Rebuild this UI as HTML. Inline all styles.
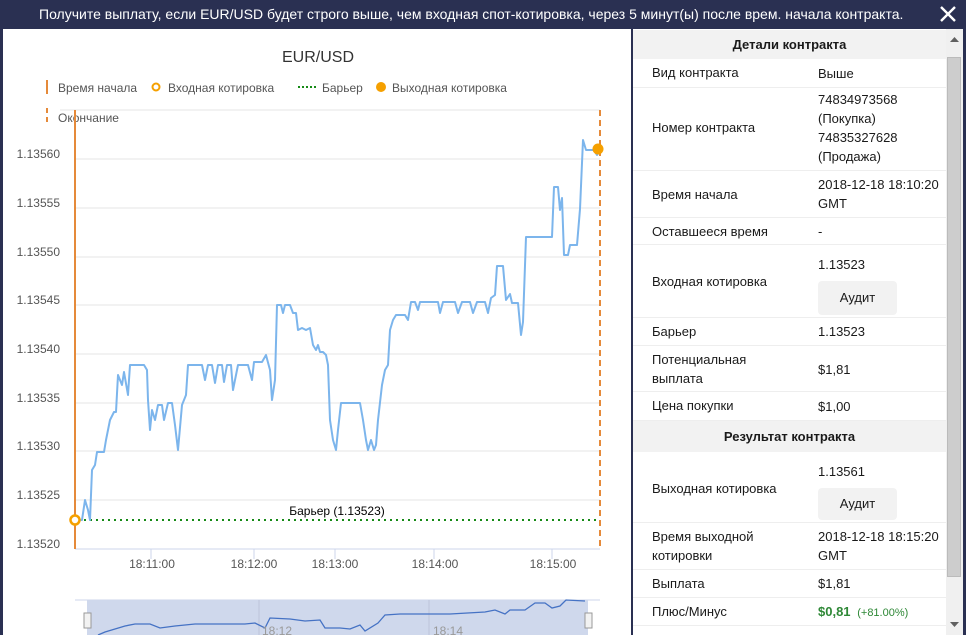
<!DOCTYPE html>
<html><head><meta charset="utf-8"><style>
*{margin:0;padding:0;box-sizing:border-box}
body{width:966px;height:635px;overflow:hidden;background:#2a3052;font-family:"Liberation Sans",Arial,sans-serif;position:relative}
#top{position:absolute;left:0;top:0;width:966px;height:29px;color:#fff;font-size:14px;line-height:29px;padding-left:39px;white-space:nowrap}
#x{position:absolute;left:939px;top:5px}
#left{position:absolute;left:3px;top:29px;width:628px;height:606px;background:#fff}
#right{position:absolute;left:633px;top:29px;width:313px;height:606px;background:#fff;font-size:13px;color:#1a1a1a}
#sb{position:absolute;left:946px;top:29px;width:17px;height:606px;background:#f0f0f0}
.row{position:absolute;left:0;width:313px;border-bottom:1px solid #eee}
.l{position:absolute;left:19px}
.v{position:absolute;left:185px;line-height:19px}
.hd{position:absolute;left:0;width:313px;background:#f2f2f2;font-weight:bold;text-align:center}
.btn{position:absolute;left:185px;width:79px;background:#f2f2f2;border-radius:4px;text-align:center}
</style></head><body>
<div id="top">Получите выплату, если EUR/USD будет строго выше, чем входная спот-котировка, через 5 минут(ы) после врем. начала контракта.</div>
<svg id="x" width="18" height="18"><path d="M2 2L16 16M16 2L2 16" stroke="#fff" stroke-width="2.4"/></svg>
<div id="left"></div>
<svg style="position:absolute;left:0;top:0" width="631" height="635" font-family="Liberation Sans,Arial,sans-serif">
<text x="318" y="62" text-anchor="middle" font-size="16" fill="#333">EUR/USD</text>
<g font-size="12" fill="#555">
<rect x="46" y="80" width="2" height="14" fill="#e58a3a"/><text x="58" y="92">Время начала</text>
<circle cx="156" cy="87" r="3.5" fill="#fff" stroke="#f5a000" stroke-width="2"/><text x="168" y="92">Входная котировка</text>
<path d="M298 87H318" stroke="#168a16" stroke-width="2" stroke-dasharray="2,2"/><text x="322" y="92">Барьер</text>
<circle cx="381" cy="87" r="5" fill="#f5a000"/><text x="392" y="92">Выходная котировка</text>
<path d="M47 108V126" stroke="#e58a3a" stroke-width="2" stroke-dasharray="5,4"/><text x="58" y="122">Окончание</text>
</g>
<path d="M60 110H600" stroke="#e6e6e6"/>
<g stroke="#e6e6e6"><path d="M75 159H600M75 208H600M75 257H600M75 305H600M75 354H600M75 403H600M75 451H600M75 500H600"/></g>
<path d="M75 549H600" stroke="#ccd6eb"/>
<g stroke="#ccd6eb"><path d="M151 549v10M254 549v10M335 549v10M434 549v10M552 549v10"/></g>
<g font-size="12" fill="#555" text-anchor="end">
<text x="60" y="158">1.13560</text><text x="60" y="207">1.13555</text><text x="60" y="256">1.13550</text><text x="60" y="304">1.13545</text><text x="60" y="353">1.13540</text><text x="60" y="402">1.13535</text><text x="60" y="450">1.13530</text><text x="60" y="499">1.13525</text><text x="60" y="548">1.13520</text>
</g>
<g font-size="12" fill="#555" text-anchor="middle"><text x="152" y="568">18:11:00</text><text x="254" y="568">18:12:00</text><text x="335" y="568">18:13:00</text><text x="435" y="568">18:14:00</text><text x="553" y="568">18:15:00</text></g>
<path d="M78 520H600" stroke="#168a16" stroke-width="2" stroke-dasharray="2,4"/>
<text x="337" y="515" text-anchor="middle" font-size="12" fill="#000">Барьер (1.13523)</text>
<polyline fill="none" stroke="#7cb5ec" stroke-width="2" stroke-linejoin="round" points="75,520 82,520 85,500 88,510 90,520 92,470 95,465 97,452 104,452 106,440 110,420 114,412 116,412 118,375 122,385 124,372 128,395 130,365 144,365 147,370 148,400 150,430 152,410 155,420 158,405 162,405 164,420 168,403 172,403 175,425 178,450 182,405 186,395 188,365 202,365 205,380 208,365 212,365 215,383 218,365 222,365 224,382 227,365 231,365 233,390 236,375 238,365 248,365 252,380 254,362 262,362 266,355 270,370 272,400 275,380 277,305 281,305 283,313 285,305 290,305 293,313 296,313 298,330 302,328 306,330 310,328 313,345 316,350 318,345 320,352 323,352 326,355 328,365 330,420 333,440 336,450 338,430 341,403 360,403 363,420 366,440 368,450 371,440 374,450 376,445 378,420 382,385 385,370 388,365 390,330 393,320 396,315 405,315 408,320 411,302 415,302 418,310 420,302 438,302 440,313 443,302 455,302 458,313 462,302 470,302 473,313 477,302 485,302 488,313 491,298 495,295 497,266 503,266 506,300 510,294 512,303 518,303 521,335 523,322 526,237 552,237 554,187 558,187 560,210 562,198 564,255 568,255 570,245 577,245 580,209 583,140 586,150 594,150 597,155 600,150"/>
<path d="M75 110V549" stroke="#e58a3a" stroke-width="2"/>
<path d="M600 110V549" stroke="#e58a3a" stroke-width="2" stroke-dasharray="6,4"/>
<circle cx="75" cy="520" r="4.5" fill="#fff" stroke="#f5a000" stroke-width="2.5"/>
<circle cx="598" cy="149" r="5.5" fill="#f5a000"/>
<path d="M75 600H600" stroke="#ccd6eb"/>
<rect x="87" y="600" width="501" height="35" fill="#cfd8ec"/>
<path d="M259 600V635M429 600V635" stroke="#bcc5da"/>
<polyline fill="none" stroke="#4572c4" stroke-width="1.3" points="98,635 105,632 115,629 125,626 135,624 150,624 160,628 175,626 195,624 220,624 245,624 255,623 265,628 270,618 290,619 305,621 320,620 325,628 340,628 350,629 360,625 365,631 378,623 385,615 400,614 450,614 485,612 495,610 505,614 510,610 525,610 535,603 545,603 552,608 560,606 566,600 585,601"/>
<g font-size="12" fill="#999"><text x="262" y="635">18:12</text><text x="433" y="635">18:14</text></g>
<rect x="84" y="613" width="7" height="15" fill="#f2f2f2" stroke="#999"/><rect x="585" y="613" width="7" height="15" fill="#f2f2f2" stroke="#999"/>
</svg>
<div id="right">
<div class="hd" style="top:1px;height:29px;line-height:29px">Детали контракта</div>
<div class="row" style="top:30px;height:29px"><span class="l" style="top:6px">Вид контракта</span><span class="v" style="top:5px">Выше</span></div>
<div class="row" style="top:59px;height:83px"><span class="l" style="top:32px">Номер контракта</span><span class="v" style="top:2px">74834973568<br>(Покупка)<br>74835327628<br>(Продажа)</span></div>
<div class="row" style="top:142px;height:47px"><span class="l" style="top:16px">Время начала</span><span class="v" style="top:4px">2018-12-18 18:10:20<br>GMT</span></div>
<div class="row" style="top:189px;height:27px"><span class="l" style="top:6px">Оставшееся время</span><span class="v" style="top:4px">-</span></div>
<div class="row" style="top:216px;height:73px"><span class="l" style="top:29px">Входная котировка</span><span class="v" style="top:10px">1.13523</span><div class="btn" style="top:36px;height:34px;line-height:34px">Аудит</div></div>
<div class="row" style="top:289px;height:28px"><span class="l" style="top:6px">Барьер</span><span class="v" style="top:4px">1.13523</span></div>
<div class="row" style="top:317px;height:46px"><span class="l" style="top:4px;line-height:19px">Потенциальная<br>выплата</span><span class="v" style="top:14px">$1,81</span></div>
<div class="row" style="top:363px;height:29px"><span class="l" style="top:6px">Цена покупки</span><span class="v" style="top:5px">$1,00</span></div>
<div class="hd" style="top:392px;height:31px;line-height:31px">Результат контракта</div>
<div class="row" style="top:423px;height:71px"><span class="l" style="top:29px">Выходная котировка</span><span class="v" style="top:10px">1.13561</span><div class="btn" style="top:36px;height:32px;line-height:32px">Аудит</div></div>
<div class="row" style="top:494px;height:47px"><span class="l" style="top:4px;line-height:19px">Время выходной<br>котировки</span><span class="v" style="top:4px">2018-12-18 18:15:20<br>GMT</span></div>
<div class="row" style="top:541px;height:28px"><span class="l" style="top:6px">Выплата</span><span class="v" style="top:4px">$1,81</span></div>
<div class="row" style="top:569px;height:28px"><span class="l" style="top:6px">Плюс/Минус</span><span class="v" style="top:4px"><b style="color:#2e8836">$0,81</b> <span style="color:#2e8836;font-size:11px">&nbsp;(+81.00%)</span></span></div>
</div>
<div id="sb"><div style="position:absolute;left:1px;top:28px;width:14px;height:520px;background:#cdcdcd;border:1px solid #bbb"></div>
<svg style="position:absolute;left:4px;top:8px" width="9" height="6"><path d="M0 5L4.5 0L9 5Z" fill="#606060"/></svg>
<svg style="position:absolute;left:4px;top:593px" width="9" height="6"><path d="M0 0L4.5 5L9 0Z" fill="#606060"/></svg></div>
</body></html>
